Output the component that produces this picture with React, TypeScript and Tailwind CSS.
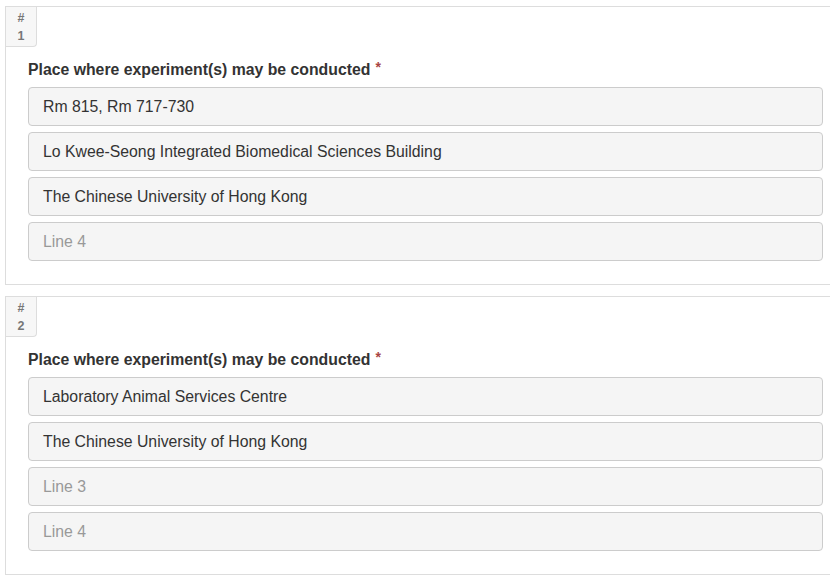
import React from 'react';

interface Place {
  id: number;
  lines: string[];
}

const places: Place[] = [
  {
    id: 1,
    lines: [
      'Rm 815, Rm 717-730',
      'Lo Kwee-Seong Integrated Biomedical Sciences Building',
      'The Chinese University of Hong Kong',
      '',
    ],
  },
  {
    id: 2,
    lines: ['Laboratory Animal Services Centre', 'The Chinese University of Hong Kong', '', ''],
  },
];

function PlaceCard({ place }: { place: Place }) {
  return (
    <div className="w-[827px] border border-[#dddddd] bg-white pb-[23px]">
      {/* Index badge */}
      <div className="flex h-[40px] w-[31px] flex-col items-center justify-center rounded-br-[4px] border-r border-b border-[#dddddd] bg-[#f7f7f7] text-[12.5px] leading-[18px] font-bold text-[#777777]">
        <span>#</span>
        <span>{place.id}</span>
      </div>

      <div className="pl-[22px] pr-[7px]">
        <div className="mt-[13px] mb-[7px] flex h-[20px] items-center text-[15.8px] font-bold text-[#333333]">
          Place where experiment(s) may be conducted
          <span className="ml-[5px] -mt-[6px] text-[14px] text-[#a94442]">*</span>
        </div>

        <div className="flex w-[795px] flex-col gap-[6px]">
          {place.lines.map((line, i) => (
            <div
              key={i}
              className={`flex h-[39px] items-center rounded-[4px] border border-[#cccccc] bg-[#f5f5f5] pl-[14px] text-[15.8px] ${
                line ? 'text-[#333333]' : 'text-[#999999]'
              }`}
            >
              {line || `Line ${i + 1}`}
            </div>
          ))}
        </div>
      </div>
    </div>
  );
}

export default function App() {
  return (
    <div
      className="h-[584px] w-[830px] overflow-hidden bg-white pt-[6px] pl-[5px]"
      style={{ fontFamily: '"Liberation Sans", Arial, sans-serif' }}
    >
      <div className="flex flex-col gap-[11px]">
        {places.map((p) => (
          <PlaceCard key={p.id} place={p} />
        ))}
      </div>
    </div>
  );
}
